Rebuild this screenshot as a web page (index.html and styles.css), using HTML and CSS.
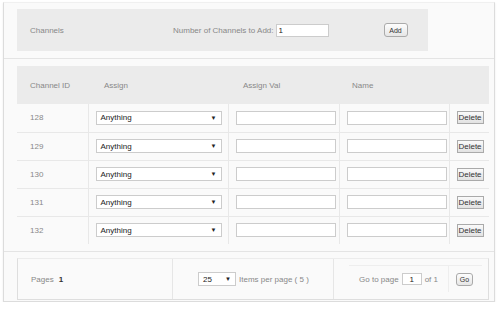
FILE: index.html
```html
<!DOCTYPE html>
<html lang="en">
<head>
  <meta charset="UTF-8" />
  <title>Channels</title>
  <link rel="stylesheet" href="styles.css">
</head>
<body>
  <div class="wrap">

    <!-- Add channels bar -->
    <div class="top-panel">
      <span class="title">Channels</span>
      <span class="add-label">Number of Channels to Add:</span>
      <input type="text" class="num-input" value="1" />
      <button class="btn add-btn">Add</button>
    </div>

    <div class="sep"></div>

    <table class="grid">
      <colgroup>
        <col style="width: 71px">
        <col style="width: 140px">
        <col style="width: 111px">
        <col style="width: 110px">
        <col style="width: 40px">
      </colgroup>
      <thead>
        <tr>
          <th>Channel ID</th>
          <th class="pad-l">Assign</th>
          <th class="pad-l2">Assign Val</th>
          <th>Name</th>
          <th></th>
        </tr>
      </thead>
      <tbody id="rows"></tbody>
    </table>

    <div class="sep low"></div>

    <!-- Pager -->
    <div class="pager">
      <div class="cell pages">Pages <b>1</b></div>
      <div class="cell per-page">
        <div class="fake-select small">25<span class="arrow">▼</span></div>
        Items per page ( 5 )
      </div>
      <div class="cell goto">
        <div class="goto-inner">
          <div class="goto-text">Go to page <input type="text" class="page-input" value="1" /> of 1</div>
          <div class="goto-btn"><button class="btn go-btn">Go</button></div>
        </div>
      </div>
    </div>
  </div>

  <script>
    const ids = [128, 129, 130, 131, 132];
    const body = document.getElementById("rows");
    ids.forEach(id => {
      const tr = document.createElement("tr");
      tr.innerHTML = `
        <td class="id">${id}</td>
        <td><div class="fake-select">Anything<span class="arrow">▼</span></div></td>
        <td><input type="text" class="txt" /></td>
        <td><input type="text" class="txt" /></td>
        <td><button class="del-btn">Delete</button></td>
      `;
      body.appendChild(tr);
    });
  </script>
</body>
</html>
```

FILE: styles.css
```css
body {
  font-family: "Liberation Sans", Arial, sans-serif;
  margin: 0;
  padding: 0;
  background: #fff;
  color: #888;
  font-size: 8px;
}
.wrap {
  margin: 2px 3px 0 3px;
  width: 492px;
  height: 300px;
  box-sizing: border-box;
  border: 1px solid #dcdcdc;
  border-top-color: #f0f0f0;
  background: #fafafa;
  padding: 6px 13px 0 13px;
  box-shadow: 0 1px 2px rgba(0,0,0,0.08);
}
.top-panel {
  width: 411px;
  height: 42px;
  background: #ebebeb;
  display: flex;
  align-items: center;
}
.top-panel .title {
  margin-left: 13px;
  width: 143px;
}
.num-input {
  width: 53px;
  height: 13px;
  box-sizing: border-box;
  margin-left: 2px;
  border: 1px solid #ccc;
  font: 8px "Liberation Sans", Arial, sans-serif;
  padding: 0 2px;
  color: #222;
  background: #fff;
}
.btn {
  font: 7px "Liberation Sans", Arial, sans-serif;
  color: #333;
  background: linear-gradient(#fdfdfd, #e6e6e6);
  border: 1px solid #aaa;
  border-radius: 3px;
  padding: 0;
}
.add-btn {
  margin-left: 55px;
  width: 24px;
  height: 14px;
}
.sep {
  border-top: 1px solid #e4e4e4;
  margin: 7px -13px 7px -13px;
}
.sep.low {
  margin: 7px -13px 6px -13px;
}
.grid {
  width: 472px;
  border-collapse: collapse;
  table-layout: fixed;
}
.grid th {
  background: #ebebeb;
  height: 38px;
  font-weight: normal;
  text-align: left;
  padding: 0 0 0 13px;
  color: #888;
}
.grid th.pad-l {
  padding-left: 16px;
}
.grid th.pad-l2 {
  padding-left: 15px;
}
.grid td {
  height: 28px;
  box-sizing: border-box;
  border-bottom: 1px solid #e8e8e8;
  border-left: 1px solid #e8e8e8;
  padding: 0 0 0 7px;
}
.grid tr:last-child td {
  border-bottom: none;
}
.grid td.id {
  border-left: none;
  padding-left: 13px;
  color: #888;
}
.fake-select {
  width: 126px;
  height: 14px;
  box-sizing: border-box;
  border: 1px solid #ccc;
  background: #fff;
  color: #222;
  font-size: 8px;
  display: flex;
  align-items: center;
  justify-content: space-between;
  padding: 0 4px 0 4px;
}
.fake-select .arrow {
  font-size: 6px;
  color: #222;
}
.fake-select.small {
  width: 38px;
  display: inline-flex;
  margin-right: 3px;
}
.txt {
  width: 100px;
  height: 14px;
  box-sizing: border-box;
  border: 1px solid #ccc;
  background: #fff;
  display: block;
}
.del-btn {
  font: 8px "Liberation Sans", Arial, sans-serif;
  color: #333;
  width: 27px;
  height: 13px;
  padding: 0;
  border: 1px solid #aaa;
  background: linear-gradient(#fafafa, #e2e2e2);
}
.pager {
  width: 472px;
  height: 42px;
  box-sizing: border-box;
  border: 1px solid #dedede;
  border-top-color: #ececec;
  display: flex;
}
.pager .cell {
  display: flex;
  align-items: center;
  box-sizing: border-box;
}
.pages {
  width: 155px;
  padding-left: 13px;
  border-right: 1px solid #e6e6e6;
}
.pages b {
  color: #333;
  margin-left: 5px;
}
.per-page {
  width: 161px;
  padding-left: 25px;
  border-right: 1px solid #e6e6e6;
}
.goto {
  flex: 1;
  padding: 6px 6px 7px 15px;
  align-items: stretch !important;
}
.goto-inner {
  flex: 1;
  display: flex;
  border-top: 1px solid #eee;
}
.goto-text {
  width: 99px;
  display: flex;
  align-items: center;
  justify-content: center;
  border-right: 1px solid #eee;
}
.page-input {
  width: 20px;
  height: 12px;
  box-sizing: border-box;
  border: 1px solid #ccc;
  margin: 0 3px;
  font: 8px "Liberation Sans", Arial, sans-serif;
  text-align: center;
  color: #222;
  padding: 0;
}
.goto-btn {
  flex: 1;
  display: flex;
  align-items: center;
  padding-left: 7px;
}
.go-btn {
  width: 17px;
  height: 13px;
}
```
